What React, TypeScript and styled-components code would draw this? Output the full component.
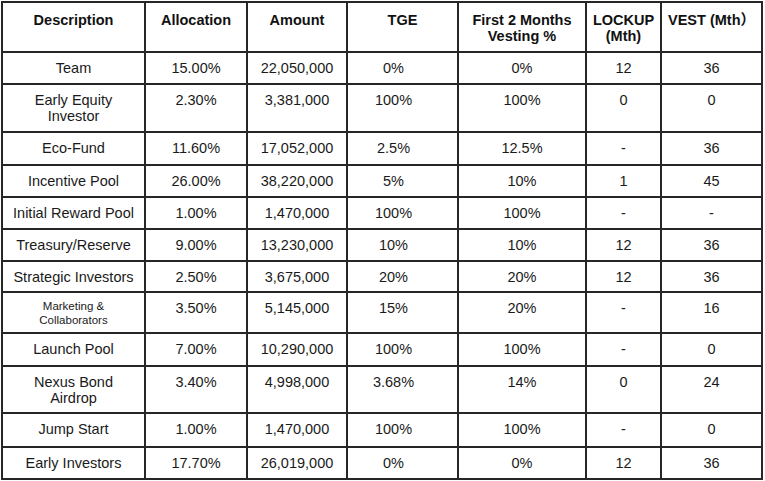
import styled, { createGlobalStyle } from "styled-components";

const GlobalStyle = createGlobalStyle`
  html, body {
    margin: 0;
    padding: 0;
    background: #fff;
  }
  body {
    font-family: "Liberation Sans", Arial, "Noto Sans CJK SC", sans-serif;
    color: #111;
  }
`;

// line-to-line widths measured off the screenshot
const columns = [143, 102, 100, 111, 128, 75, 101];

const Page = styled.div`
  padding: 1px 0 0 1px;
`;

const Table = styled.table`
  border-collapse: collapse;
  table-layout: fixed;
  width: 762px;
`;

const Row = styled.tr<{ $h: number }>`
  height: ${(p) => p.$h}px;
`;

const Head = styled.th`
  border: 2px solid #262626;
  padding: 9px 3px 0;
  vertical-align: top;
  text-align: center;
  font-size: 14.5px;
  line-height: 16px;
  font-weight: bold;
  color: #111;
`;

const Cell = styled.td<{ $small?: boolean; $shift?: number }>`
  border: 2px solid #262626;
  padding: ${(p) => (p.$small ? "6px" : "7px")} ${(p) => 3 + (p.$shift ?? 0)}px 0 3px;
  vertical-align: top;
  text-align: center;
  white-space: pre-line;
  font-size: ${(p) => (p.$small ? "11.5px" : "14.5px")};
  line-height: ${(p) => (p.$small ? "14px" : "16px")};
  color: #1a1a1a;
`;

type Entry = {
  name: string;
  alloc: string;
  amount: string;
  tge: string;
  first: string;
  lockup: string;
  vest: string;
  h: number;
  small?: boolean;
};

const rows: Entry[] = [
  { name: "Team", alloc: "15.00%", amount: "22,050,000", tge: "0%", first: "0%", lockup: "12", vest: "36", h: 32 },
  { name: "Early Equity\nInvestor", alloc: "2.30%", amount: "3,381,000", tge: "100%", first: "100%", lockup: "0", vest: "0", h: 48 },
  { name: "Eco-Fund", alloc: "11.60%", amount: "17,052,000", tge: "2.5%", first: "12.5%", lockup: "-", vest: "36", h: 33 },
  { name: "Incentive Pool", alloc: "26.00%", amount: "38,220,000", tge: "5%", first: "10%", lockup: "1", vest: "45", h: 32 },
  { name: "Initial Reward Pool", alloc: "1.00%", amount: "1,470,000", tge: "100%", first: "100%", lockup: "-", vest: "-", h: 32 },
  { name: "Treasury/Reserve", alloc: "9.00%", amount: "13,230,000", tge: "10%", first: "10%", lockup: "12", vest: "36", h: 32 },
  { name: "Strategic Investors", alloc: "2.50%", amount: "3,675,000", tge: "20%", first: "20%", lockup: "12", vest: "36", h: 31 },
  { name: "Marketing &\nCollaborators", alloc: "3.50%", amount: "5,145,000", tge: "15%", first: "20%", lockup: "-", vest: "16", h: 41, small: true },
  { name: "Launch Pool", alloc: "7.00%", amount: "10,290,000", tge: "100%", first: "100%", lockup: "-", vest: "0", h: 33 },
  { name: "Nexus Bond\nAirdrop", alloc: "3.40%", amount: "4,998,000", tge: "3.68%", first: "14%", lockup: "0", vest: "24", h: 47 },
  { name: "Jump Start", alloc: "1.00%", amount: "1,470,000", tge: "100%", first: "100%", lockup: "-", vest: "0", h: 34 },
  { name: "Early Investors", alloc: "17.70%", amount: "26,019,000", tge: "0%", first: "0%", lockup: "12", vest: "36", h: 32 },
];

const App = () => {
  return (
    <>
      <GlobalStyle />
      <Page>
        <Table>
          <colgroup>
            {columns.map((w, i) => (
              <col key={i} style={{ width: w }} />
            ))}
          </colgroup>
          <thead>
            <Row $h={50}>
              <Head>Description</Head>
              <Head>Allocation</Head>
              <Head>Amount</Head>
              <Head>TGE</Head>
              <Head>
                First 2 Months
                <br />
                Vesting %
              </Head>
              <Head>
                LOCKUP
                <br />
                (Mth)
              </Head>
              <Head>VEST (Mth）</Head>
            </Row>
          </thead>
          <tbody>
            {rows.map((r) => (
              <Row key={r.name} $h={r.h}>
                <Cell $small={r.small}>{r.name}</Cell>
                <Cell>{r.alloc}</Cell>
                <Cell>{r.amount}</Cell>
                {/* TGE values sit left of the column centre in the source */}
                <Cell $shift={18}>{r.tge}</Cell>
                <Cell>{r.first}</Cell>
                <Cell>{r.lockup}</Cell>
                <Cell>{r.vest}</Cell>
              </Row>
            ))}
          </tbody>
        </Table>
      </Page>
    </>
  );
};

export default App;
